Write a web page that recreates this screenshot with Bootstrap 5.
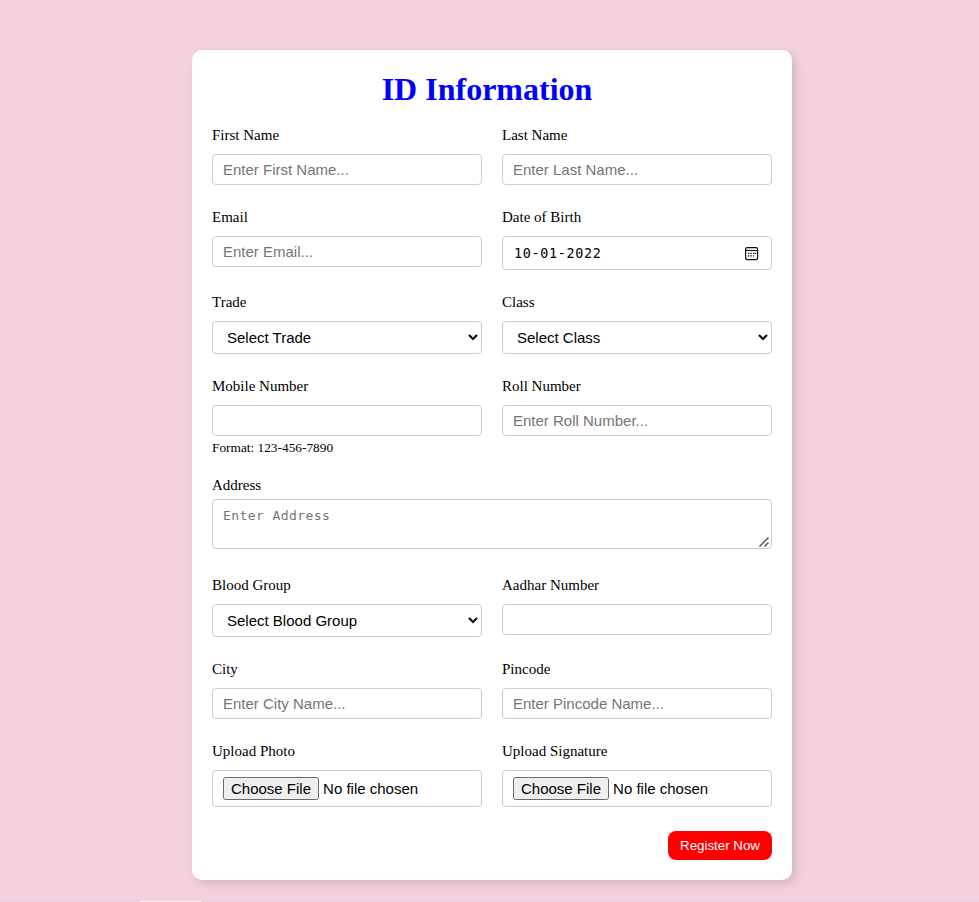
<!DOCTYPE html>
<html lang="en">
<head>
<meta charset="utf-8">
<meta name="viewport" content="width=device-width, initial-scale=1">
<title>ID Information</title>
<link href="https://cdn.jsdelivr.net/npm/bootstrap@5.3.0/dist/css/bootstrap.min.css" rel="stylesheet">
<style>
body{background:#f3d1dc;font-family:"Liberation Serif","Times New Roman",serif;font-size:15px;color:#000;line-height:18px;height:902px;overflow:hidden}
.id-card{width:600px;height:830px;margin:50px 0 0 192px;padding:20px;border-radius:10px;background:#fff;box-shadow:4px 4px 8px rgba(0,0,0,.12)}
.id-title{font-size:32px;font-weight:700;line-height:37px;color:#00f;margin:1px 10px 18px 0}
.fields{--bs-gutter-x:20px}
.fields>div{margin-bottom:23px}
.fields label{display:block;margin-bottom:10px}
.field,.fields .form-control{display:block;width:100%;height:31px;padding:0 10px;border:1px solid #ccc;border-radius:4px;background:#fff;color:#000;font:15px/normal "Liberation Sans",Arial,sans-serif}
.fields .form-control::placeholder{color:#757575;opacity:1}
.fields select.field{height:33px}
.fields input[type=file].field{height:37px;padding:6px 10px}
.field::file-selector-button{height:23px;padding:1px 7px;border:1px solid #6b6b6b;border-radius:2.5px;background:#efefef;color:#000;font:inherit;margin-right:4px}
.fields .date-box{display:flex;height:34px;padding:0 12px 0 11px}
.date-box input{border:0;outline:0;padding:0;width:150px;color:#000;background:transparent;font:13.4px "DejaVu Sans Mono",Consolas,monospace;letter-spacing:.7px}
.fields textarea.form-control{height:50px;min-height:50px;padding:7px 10px;font:13px/18px "DejaVu Sans Mono",Consolas,monospace;letter-spacing:.42px;resize:none}
.grip{right:1px;bottom:1px}
.fields .address{margin-bottom:27px}
.fields .address label{margin-bottom:5px}
.hint{font-size:13.33px;line-height:16px;margin:4px 0 -3px}
.fields .uploads{margin-bottom:24px}
.btn.register{height:29px;width:104px;padding:0;border:0;border-radius:8px;background:#f00;color:#fff;font:13.33px "Liberation Sans",Arial,sans-serif}
.edge{height:1px;background:linear-gradient(90deg,#dfd6e4 140px,#fbeeee 140px 201px,#dfd6e4 201px)}
</style>
<script src="https://cdn.jsdelivr.net/npm/bootstrap@5.3.0/dist/js/bootstrap.bundle.min.js"></script>
</head>
<body class="d-flex flex-column">
<form class="id-card" onsubmit="return false">
  <h1 class="id-title text-center">ID Information</h1>
  <div class="row fields">
    <div class="col-6"><label for="fn">First Name</label><input id="fn" class="form-control" placeholder="Enter First Name..."></div>
    <div class="col-6"><label for="ln">Last Name</label><input id="ln" class="form-control" placeholder="Enter Last Name..."></div>
    <div class="col-6"><label for="em">Email</label><input id="em" class="form-control" placeholder="Enter Email..."></div>
    <div class="col-6"><label for="dob">Date of Birth</label>
      <div class="field date-box align-items-center justify-content-between"><input id="dob" value="10-01-2022">
        <svg width="15" height="15" viewBox="0 0 15 15" fill="none" stroke="#111"><rect x="1.6" y="1.6" width="12" height="12" rx="1.6" stroke-width="1.2"/><path d="M1.5 4.5h12" stroke-width="1.1"/><path d="M6.4 7.4h1.4M9 7.4h1.4M11 7.4h1.2M3.9 9.9h1.4M6.4 9.9h1.4M3.9 7.4h1.4M9 9.9h1.1" stroke-width="1.4"/></svg></div></div>
    <div class="col-6"><label for="tr">Trade</label><select id="tr" class="field"><option>Select Trade</option></select></div>
    <div class="col-6"><label for="cl">Class</label><select id="cl" class="field"><option>Select Class</option></select></div>
    <div class="col-6"><label for="mn">Mobile Number</label><input id="mn" type="tel" class="form-control"><div class="hint">Format: 123-456-7890</div></div>
    <div class="col-6"><label for="rn">Roll Number</label><input id="rn" class="form-control" placeholder="Enter Roll Number..."></div>
    <div class="col-12 address"><label for="ad">Address</label>
      <div class="position-relative"><textarea id="ad" class="form-control" placeholder="Enter Address"></textarea><svg class="grip position-absolute" width="13" height="13" viewBox="0 0 13 13" stroke="#555" stroke-width="1.5"><path d="M1.5 11.5l9-9M6.5 11.5l4-4"/></svg></div></div>
    <div class="col-6"><label for="bg">Blood Group</label><select id="bg" class="field"><option>Select Blood Group</option></select></div>
    <div class="col-6"><label for="an">Aadhar Number</label><input id="an" class="form-control"></div>
    <div class="col-6"><label for="ci">City</label><input id="ci" class="form-control" placeholder="Enter City Name..."></div>
    <div class="col-6"><label for="pi">Pincode</label><input id="pi" class="form-control" placeholder="Enter Pincode Name..."></div>
    <div class="col-6 uploads"><label for="up">Upload Photo</label><input id="up" type="file" class="field"></div>
    <div class="col-6 uploads"><label for="us">Upload Signature</label><input id="us" type="file" class="field"></div>
  </div>
  <div class="d-flex justify-content-end"><button class="btn register">Register Now</button></div>
</form>
<div class="edge mt-auto"></div>
</body>
</html>
